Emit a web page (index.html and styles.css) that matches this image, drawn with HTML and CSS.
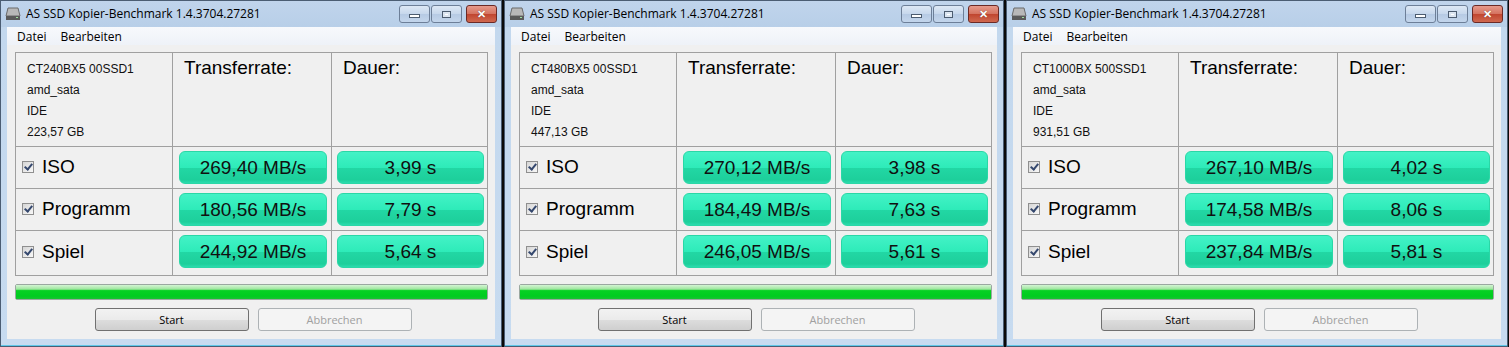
FILE: index.html
```html
<!DOCTYPE html>
<html lang="de">
<head>
    <meta charset="UTF-8">
    <title>AS SSD Kopier-Benchmark</title>
    <link rel="stylesheet" href="styles.css">
</head>
<body>
<div class="desktop">

    <!-- Fenster 1 -->
    <div class="window">
        <div class="titlebar">
            <span class="app-icon"><svg width="16" height="16" viewBox="0 0 16 16"><path d="M3 3h10l2 8H1z" fill="#b8b8b8" stroke="#6a6a6a"/><rect x="1" y="11" width="14" height="4" fill="#5a5a5a"/><rect x="11" y="12" width="2" height="1" fill="#9fe09f"/></svg></span>
            <span class="title">AS SSD Kopier-Benchmark 1.4.3704.27281</span>
            <div class="caption-buttons">
                <span class="cap-btn"><span class="glyph-min"></span></span>
                <span class="cap-btn"><span class="glyph-max"></span></span>
                <span class="cap-btn close"><span class="glyph-close">&#x2715;</span></span>
            </div>
        </div>
        <div class="client">
            <div class="menu"><span>Datei</span><span>Bearbeiten</span></div>
            <div class="panel">
                <div class="cell info">
                    <div>CT240BX5 00SSD1</div>
                    <div>amd_sata</div>
                    <div>IDE</div>
                    <div>223,57 GB</div>
                </div>
                <div class="cell head">Transferrate:</div>
                <div class="cell head">Dauer:</div>

                <div class="cell label"><span class="check"></span>ISO</div>
                <div class="cell value"><div class="pill">269,40 MB/s</div></div>
                <div class="cell value last"><div class="pill">3,99 s</div></div>

                <div class="cell label"><span class="check"></span>Programm</div>
                <div class="cell value"><div class="pill">180,56 MB/s</div></div>
                <div class="cell value last"><div class="pill">7,79 s</div></div>

                <div class="cell label"><span class="check"></span>Spiel</div>
                <div class="cell value"><div class="pill">244,92 MB/s</div></div>
                <div class="cell value last"><div class="pill">5,64 s</div></div>
            </div>
            <div class="progress"><div class="progress-fill"></div></div>
            <div class="buttons">
                <button class="btn">Start</button>
                <button class="btn" disabled>Abbrechen</button>
            </div>
        </div>
    </div>

    <!-- Fenster 2 -->
    <div class="window middle">
        <div class="titlebar">
            <span class="app-icon"><svg width="16" height="16" viewBox="0 0 16 16"><path d="M3 3h10l2 8H1z" fill="#b8b8b8" stroke="#6a6a6a"/><rect x="1" y="11" width="14" height="4" fill="#5a5a5a"/><rect x="11" y="12" width="2" height="1" fill="#9fe09f"/></svg></span>
            <span class="title">AS SSD Kopier-Benchmark 1.4.3704.27281</span>
            <div class="caption-buttons">
                <span class="cap-btn"><span class="glyph-min"></span></span>
                <span class="cap-btn"><span class="glyph-max"></span></span>
                <span class="cap-btn close"><span class="glyph-close">&#x2715;</span></span>
            </div>
        </div>
        <div class="client">
            <div class="menu"><span>Datei</span><span>Bearbeiten</span></div>
            <div class="panel">
                <div class="cell info">
                    <div>CT480BX5 00SSD1</div>
                    <div>amd_sata</div>
                    <div>IDE</div>
                    <div>447,13 GB</div>
                </div>
                <div class="cell head">Transferrate:</div>
                <div class="cell head">Dauer:</div>

                <div class="cell label"><span class="check"></span>ISO</div>
                <div class="cell value"><div class="pill">270,12 MB/s</div></div>
                <div class="cell value last"><div class="pill">3,98 s</div></div>

                <div class="cell label"><span class="check"></span>Programm</div>
                <div class="cell value"><div class="pill">184,49 MB/s</div></div>
                <div class="cell value last"><div class="pill">7,63 s</div></div>

                <div class="cell label"><span class="check"></span>Spiel</div>
                <div class="cell value"><div class="pill">246,05 MB/s</div></div>
                <div class="cell value last"><div class="pill">5,61 s</div></div>
            </div>
            <div class="progress"><div class="progress-fill"></div></div>
            <div class="buttons">
                <button class="btn">Start</button>
                <button class="btn" disabled>Abbrechen</button>
            </div>
        </div>
    </div>

    <!-- Fenster 3 -->
    <div class="window">
        <div class="titlebar">
            <span class="app-icon"><svg width="16" height="16" viewBox="0 0 16 16"><path d="M3 3h10l2 8H1z" fill="#b8b8b8" stroke="#6a6a6a"/><rect x="1" y="11" width="14" height="4" fill="#5a5a5a"/><rect x="11" y="12" width="2" height="1" fill="#9fe09f"/></svg></span>
            <span class="title">AS SSD Kopier-Benchmark 1.4.3704.27281</span>
            <div class="caption-buttons">
                <span class="cap-btn"><span class="glyph-min"></span></span>
                <span class="cap-btn"><span class="glyph-max"></span></span>
                <span class="cap-btn close"><span class="glyph-close">&#x2715;</span></span>
            </div>
        </div>
        <div class="client">
            <div class="menu"><span>Datei</span><span>Bearbeiten</span></div>
            <div class="panel">
                <div class="cell info">
                    <div>CT1000BX 500SSD1</div>
                    <div>amd_sata</div>
                    <div>IDE</div>
                    <div>931,51 GB</div>
                </div>
                <div class="cell head">Transferrate:</div>
                <div class="cell head">Dauer:</div>

                <div class="cell label"><span class="check"></span>ISO</div>
                <div class="cell value"><div class="pill">267,10 MB/s</div></div>
                <div class="cell value last"><div class="pill">4,02 s</div></div>

                <div class="cell label"><span class="check"></span>Programm</div>
                <div class="cell value"><div class="pill">174,58 MB/s</div></div>
                <div class="cell value last"><div class="pill">8,06 s</div></div>

                <div class="cell label"><span class="check"></span>Spiel</div>
                <div class="cell value"><div class="pill">237,84 MB/s</div></div>
                <div class="cell value last"><div class="pill">5,81 s</div></div>
            </div>
            <div class="progress"><div class="progress-fill"></div></div>
            <div class="buttons">
                <button class="btn">Start</button>
                <button class="btn" disabled>Abbrechen</button>
            </div>
        </div>
    </div>

</div>
</body>
</html>
```

FILE: styles.css
```css
body {
    margin: 0;
    padding: 0;
    background-color: #000;
    font-family: "Liberation Sans", Arial, sans-serif;
    overflow: hidden;
}

.desktop {
    display: flex;
    gap: 2px;
    width: 1509px;
    height: 347px;
    background-color: #0a0a0a;
}

.window {
    width: 500px;
    height: 345px;
    flex-shrink: 0;
    display: flex;
    flex-direction: column;
    border: 1px solid #4b5d73;
    background: linear-gradient(#bed3ea, #c3d8ee 30px, #c7dbf0);
    box-shadow: inset 0 -1px 0 #5fc8e8;
}

.window.middle {
    width: 498px;
}

/* Titelleiste */
.titlebar {
    height: 26px;
    display: flex;
    align-items: center;
    padding: 0 4px 0 4px;
    background: linear-gradient(#c0d4ec, #b8cfe8);
}

.app-icon {
    width: 16px;
    height: 16px;
    margin-right: 5px;
    margin-top: -2px;
}

.title {
    font-family: "Open Sans", "Noto Sans", sans-serif;
    font-size: 12px;
    color: #000;
    flex: 1;
    margin-top: -2px;
}

.caption-buttons {
    display: flex;
    gap: 1px;
    align-self: flex-start;
    margin-top: 4px;
}

.cap-btn {
    width: 29px;
    height: 16px;
    display: flex;
    align-items: center;
    justify-content: center;
    border: 1px solid #6d7f98;
    border-radius: 3px;
    background: linear-gradient(#dde8f5, #c6d7ec 50%, #b6cae4 51%, #c3d6ec);
}

.cap-btn.close {
    width: 29px;
    margin-left: 3px;
    border-color: #6b2a26;
    background: linear-gradient(#e69a8c, #d4725f 50%, #c0452f 51%, #d0684f);
}

.glyph-min {
    width: 9px;
    height: 2px;
    margin-top: 4px;
    background: #fff;
    border: 1px solid #4c5c70;
}

.glyph-max {
    width: 7px;
    height: 5px;
    border: 1px solid #4c5c70;
    background: #fff;
    box-shadow: inset 0 0 0 2px #dbe5f1;
}

.glyph-close {
    color: #fff;
    font-size: 11px;
    font-weight: bold;
    text-shadow: 0 0 1px #5a1a10;
}

/* Arbeitsbereich */
.client {
    flex: 1;
    margin: 0 6px 7px 6px;
    background-color: #f0f0f0;
    display: flex;
    flex-direction: column;
}

.menu {
    height: 18px;
    display: flex;
    align-items: center;
    gap: 14px;
    padding-left: 10px;
    font-family: "Open Sans", "Noto Sans", sans-serif;
    font-size: 12px;
    background: linear-gradient(#f7f9fc, #eef2f8);
}

.panel {
    margin: 7px 0 0 8px;
    width: 471px;
    display: grid;
    grid-template-columns: 156px 158px 155px;
    grid-template-rows: 93px 41px 41px 44px;
    gap: 1px;
    border: 1px solid #a0a0a0;
    background-color: #a0a0a0;
}

.cell {
    background-color: #f0f0f0;
}

.info {
    padding: 6px 0 0 11px;
    font-size: 12px;
    line-height: 21px;
    color: #111;
}

.head {
    padding: 4px 0 0 11px;
    font-size: 19px;
    color: #000;
}

.label {
    display: flex;
    align-items: center;
    padding: 0 0 2px 6px;
    font-size: 19px;
    color: #000;
}

.check {
    width: 12px;
    height: 12px;
    margin-right: 8px;
    border: 1px solid #8f8f8f;
    box-sizing: border-box;
    background: linear-gradient(135deg, #d6d6d6, #f8f8f8);
    position: relative;
}

.check::after {
    content: "";
    position: absolute;
    left: 3px;
    top: 0px;
    width: 3px;
    height: 6px;
    border: solid #35486e;
    border-width: 0 2px 2px 0;
    transform: rotate(40deg);
}

.value {
    padding: 4px 4px 4px 6px;
}

.value.last {
    padding: 4px 3px 4px 5px;
}

.pill {
    height: 33px;
    box-sizing: border-box;
    display: flex;
    align-items: center;
    justify-content: center;
    border-radius: 6px;
    border: 1px solid #2ad7a6;
    background: linear-gradient(#43f2c6, #2eebb9 50%, #22d7a4 52%, #1dcf9b 90%, #2bdcae);
    font-size: 19px;
    color: #101010;
    padding-top: 1px;
}

.progress {
    margin: 8px 0 0 8px;
    width: 473px;
    height: 16px;
    box-sizing: border-box;
    border: 1px solid #9aa8a0;
    border-radius: 2px;
    background: #e6e6e6;
}

.progress-fill {
    height: 100%;
    background: linear-gradient(#d4f5d4, #9de69d 30%, #06d123 40%, #00cc20 80%, #19c332);
}

.buttons {
    display: flex;
    justify-content: center;
    gap: 9px;
    margin-top: 8px;
    padding-left: 4px;
}

.btn {
    width: 154px;
    height: 23px;
    border: 1px solid #707070;
    border-radius: 3px;
    background: linear-gradient(#f2f2f2, #ebebeb 50%, #dddddd 51%, #cfcfcf);
    font-family: "Open Sans", "Noto Sans", sans-serif;
    font-size: 11px;
    color: #000;
    padding: 0;
}

.btn:disabled {
    border-color: #adb2b5;
    background: #f4f4f4;
    color: #a0a0a0;
}
```
